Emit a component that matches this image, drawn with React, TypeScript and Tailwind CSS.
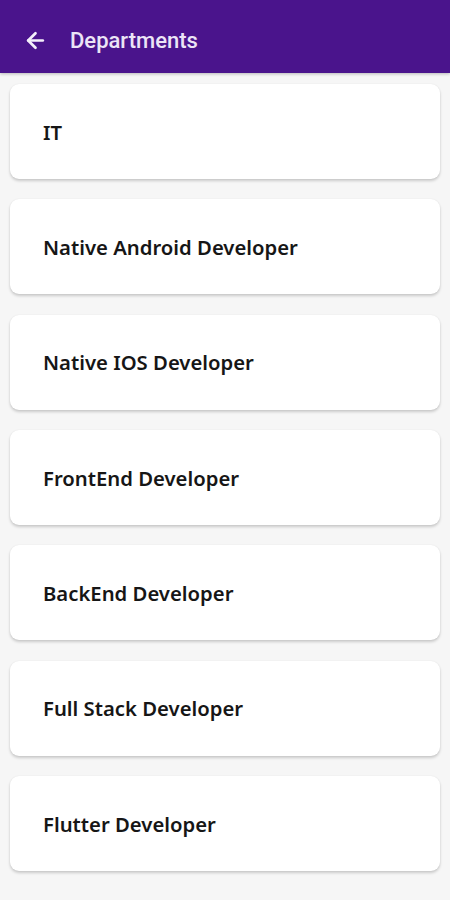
import { ArrowLeft } from "lucide-react";

const departments = [
  "IT",
  "Native Android Developer",
  "Native IOS Developer",
  "FrontEnd Developer",
  "BackEnd Developer",
  "Full Stack Developer",
  "Flutter Developer",
];

export default function App() {
  return (
    <div className="min-h-[900px] bg-[#f6f6f6]">
      {/* App bar */}
      <header className="h-[73px] bg-[#4a148c] flex items-center pl-[23px] pt-[7px] shadow-[0_1px_3px_rgba(0,0,0,0.25)] font-['Roboto',sans-serif]">
        <ArrowLeft className="w-[25px] h-[25px] text-[#f3eefa]" strokeWidth={2.6} />
        <span className="ml-[22px] text-[22px] font-medium text-[#ece4f6]">
          Departments
        </span>
      </header>

      {/* Department list */}
      <div className="flex flex-col gap-[20.33px] px-[10px] pt-[11px] pb-4">
        {departments.map((name) => (
          <div
            key={name}
            className="h-[95px] bg-white rounded-[9px] flex items-center pl-[33px] shadow-[0_2px_3px_rgba(0,0,0,0.18),0_0_2px_rgba(0,0,0,0.06)]"
          >
            <span className="text-[20.3px] font-semibold text-[#161616] font-['Noto_Sans',sans-serif] pt-[1px]">
              {name}
            </span>
          </div>
        ))}
      </div>
    </div>
  );
}
